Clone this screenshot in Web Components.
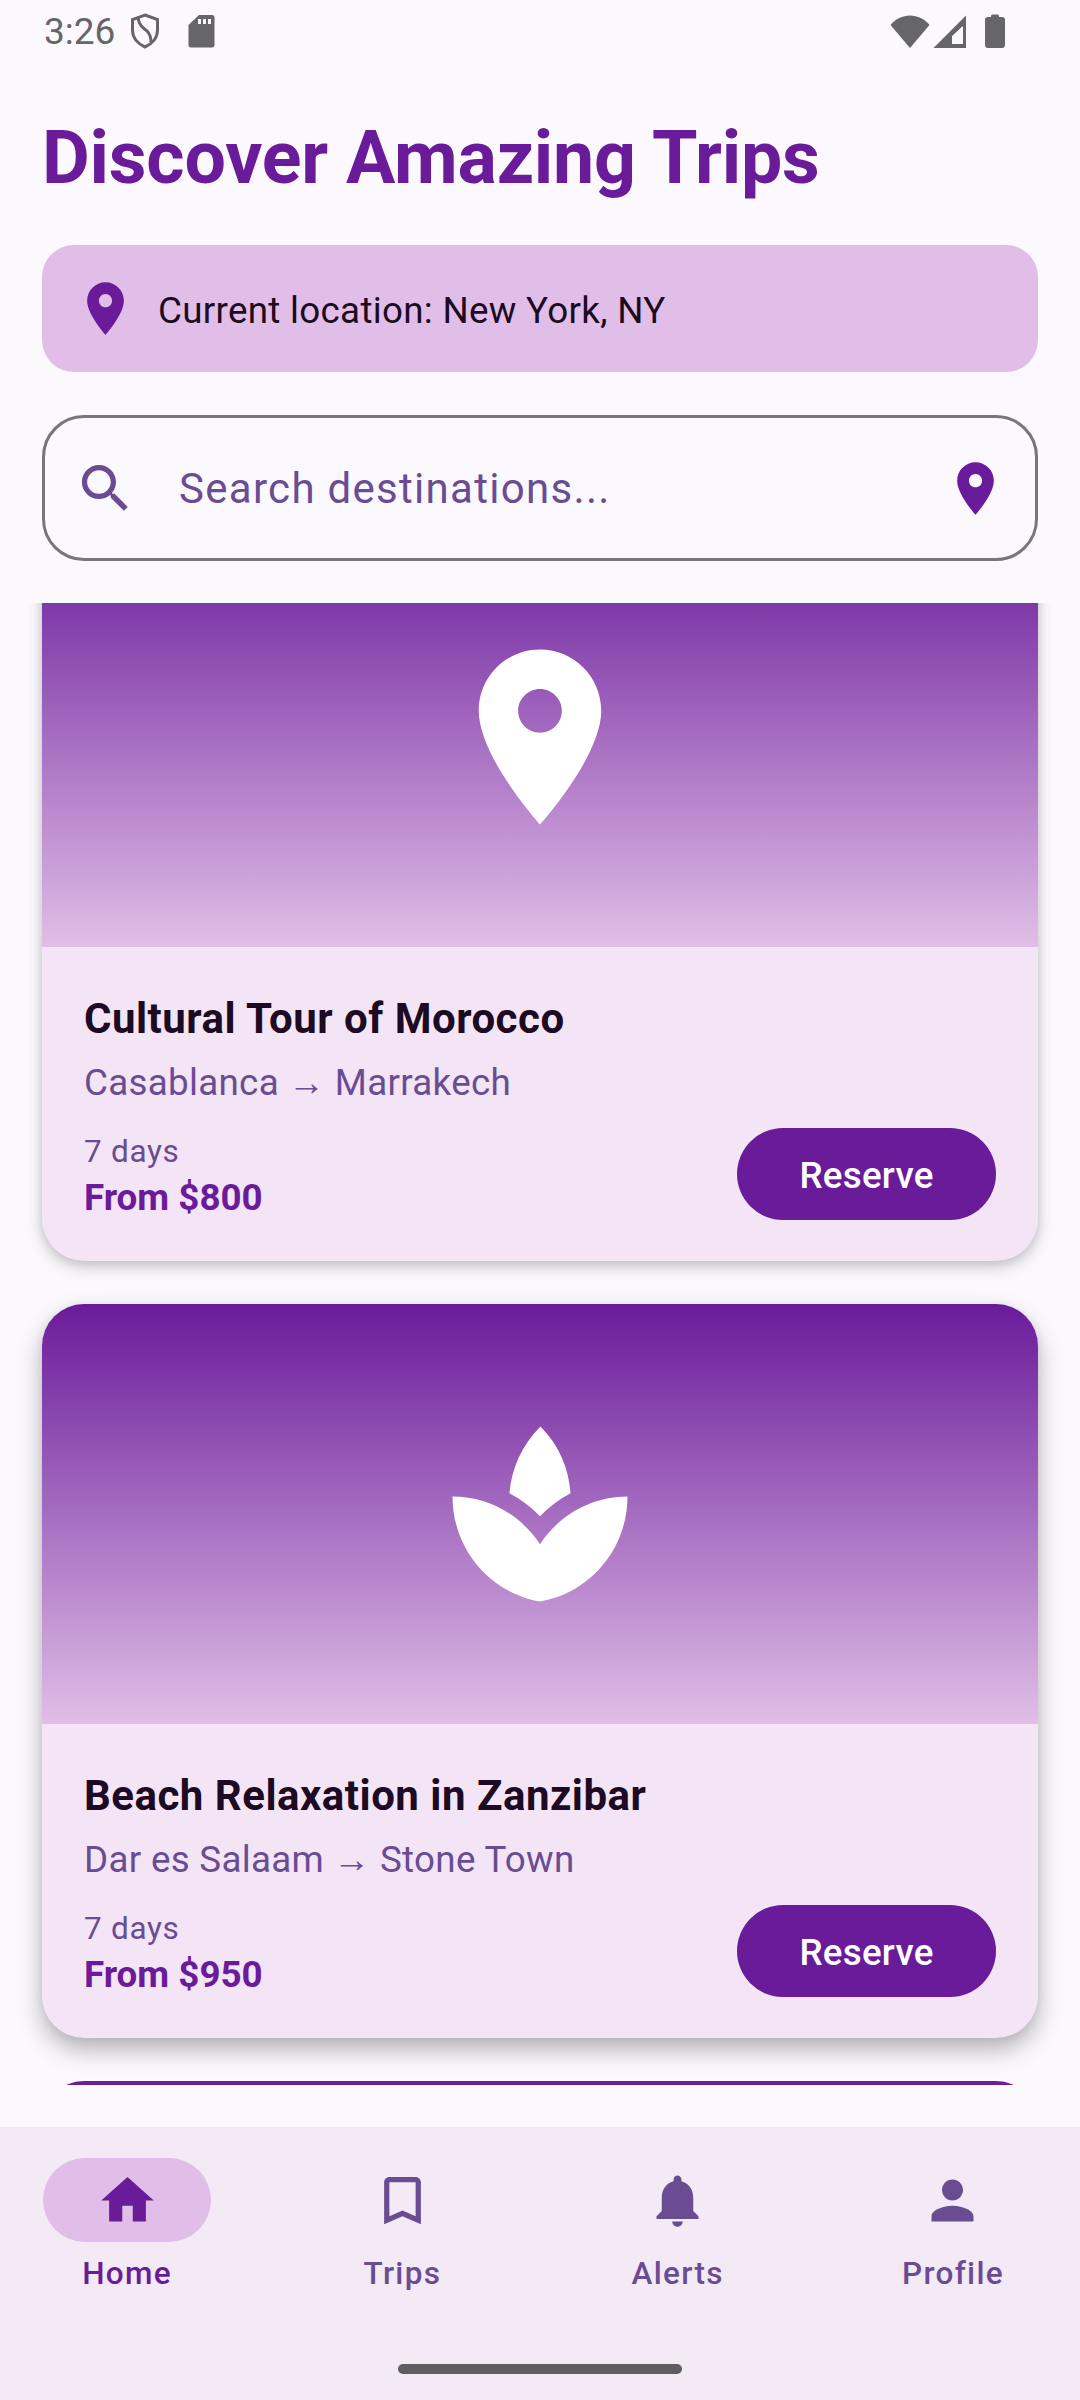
<!DOCTYPE html>
<html>
<head>
<meta charset="utf-8">
<title>Discover Amazing Trips</title>
<style>
   html, body { margin: 0; padding: 0; background: #fbf8fe; }
   body { font-family: Roboto, sans-serif; }
</style>
</head>
<body>
<trips-app>
   <status-bar time="3:26"></status-bar>
   <page-title>Discover Amazing Trips</page-title>
   <location-card>Current location: New York, NY</location-card>
   <search-field placeholder="Search destinations..."></search-field>
   <trip-list>
      <trip-card icon="place" shadow="0 6px 16px rgba(0,0,0,.2), 0 1px 10px rgba(0,0,0,.08)">
         <span slot="name">Cultural Tour of Morocco</span>
         <span slot="route">Casablanca → Marrakech</span>
         <span slot="days">7 days</span>
         <span slot="price">From $800</span>
      </trip-card>
      <trip-card icon="spa" shadow="0 12px 24px rgba(0,0,0,.28), 0 1px 10px rgba(0,0,0,.06)">
         <span slot="name">Beach Relaxation in Zanzibar</span>
         <span slot="route">Dar es Salaam → Stone Town</span>
         <span slot="days">7 days</span>
         <span slot="price">From $950</span>
      </trip-card>
      <!-- only the top edge of the next card shows above the nav -->
      <trip-card peek></trip-card>
   </trip-list>
   <bottom-nav>
      <nav-item icon="home" active>Home</nav-item>
      <nav-item icon="bookmark">Trips</nav-item>
      <nav-item icon="bell">Alerts</nav-item>
      <nav-item icon="person">Profile</nav-item>
   </bottom-nav>
</trips-app>

<script>
const iconPaths = {
   place: 'M12 2C8.13 2 5 5.13 5 9c0 5.25 7 13 7 13s7-7.75 7-13c0-3.87-3.13-7-7-7zm0 9.5c-1.38 0-2.5-1.12-2.5-2.5s1.12-2.5 2.5-2.5 2.5 1.12 2.5 2.5-1.12 2.5-2.5 2.5z',
   spa: 'M15.49 9.63c-.18-2.79-1.31-5.51-3.44-7.63-2.14 2.14-3.32 4.86-3.54 7.63 1.28.68 2.46 1.56 3.49 2.63 1.03-1.06 2.21-1.94 3.49-2.63zM12 15.45C9.85 12.17 6.18 10 2 10c0 5.32 3.36 9.82 8.03 11.49.63.23 1.29.4 1.97.51.68-.12 1.33-.29 1.97-.51C18.64 19.82 22 15.32 22 10c-4.18 0-7.85 2.17-10 5.45z',
   search: 'M15.5 14h-.79l-.28-.27C15.41 12.59 16 11.11 16 9.5 16 5.91 13.09 3 9.5 3S3 5.91 3 9.5 5.91 16 9.5 16c1.61 0 3.09-.59 4.23-1.57l.27.28v.79l5 4.99L20.49 19l-4.99-5zm-6 0C7.01 14 5 11.99 5 9.5S7.01 5 9.5 5 14 7.01 14 9.5 11.99 14 9.5 14z',
   home: 'M10 20v-6h4v6h5v-8h3L12 3 2 12h3v8z',
   bookmark: 'M17 3H7c-1.1 0-2 .9-2 2v16l7-3 7 3V5c0-1.1-.9-2-2-2zm0 15l-5-2.18L7 18V5h10v13z',
   bell: 'M12 22c1.1 0 2-.9 2-2h-4c0 1.1.9 2 2 2zm6-6v-5c0-3.07-1.63-5.64-4.5-6.32V4c0-.83-.67-1.5-1.5-1.5s-1.5.67-1.5 1.5v.68C7.64 5.36 6 7.92 6 11v5l-2 2v1h16v-1l-2-2z',
   person: 'M12 12c2.21 0 4-1.79 4-4s-1.79-4-4-4-4 1.79-4 4 1.79 4 4 4zm0 2c-2.67 0-8 1.34-8 4v2h16v-2c0-2.66-5.33-4-8-4z'
};

class AppIcon extends HTMLElement {
   static get observedAttributes() { return ['name']; }
   constructor() {
      super();
      this.attachShadow({mode: 'open'});
   }
   attributeChangedCallback() {
      const path = iconPaths[this.getAttribute('name')] || '';
      this.shadowRoot.innerHTML = `
         <style>
            :host { display: block; width: var(--icon-size, 63px); height: var(--icon-size, 63px); flex: none; }
            svg { display: block; width: 100%; height: 100%; fill: currentColor; }
         </style>
         <svg viewBox="0 0 24 24"><path d="${path}" /></svg>`;
   }
}
customElements.define('app-icon', AppIcon);

const appTemplate = document.createElement('template');
appTemplate.innerHTML = `
   <style>
      :host { display: flex; flex-direction: column; width: 1080px; height: 2400px; overflow: hidden; background: #fbf8fe; }
   </style>
   <slot></slot>`;

class TripsApp extends HTMLElement {
   constructor() {
      super();
      this.attachShadow({mode: 'open'});
      this.shadowRoot.append(appTemplate.content.cloneNode(true));
   }
}
customElements.define('trips-app', TripsApp);

const statusTemplate = document.createElement('template');
statusTemplate.innerHTML = `
   <style>
      :host { display: flex; align-items: center; height: 62px; padding: 0 75px 0 44px; color: #666568; font: 400 37px Roboto, sans-serif; }
      svg { display: block; fill: #666568; }
      .time { margin-right: 15px; }
      .sd { margin-left: 28px; }
      .right { margin-left: auto; display: flex; align-items: center; }
   </style>
   <span class="time"></span>
   <svg width="30" height="36" viewBox="0 0 30 36">
      <path d="M15 2 L27.5 6.5 V17 C27.5 25 22 31 15 34 C8 31 2.5 25 2.5 17 V6.5 Z" fill="none" stroke="#666568" stroke-width="3" />
      <path d="M8 5 C9 12 13 15 17 18 C20 21 21 24 21 29" fill="none" stroke="#666568" stroke-width="3" />
   </svg>
   <svg class="sd" width="27" height="34" viewBox="0 0 27 34">
      <path fill-rule="evenodd" d="M11 1 H24 C25.6 1 26.5 1.9 26.5 3.5 V31 C26.5 32.6 25.6 33.5 24 33.5 H3 C1.4 33.5 .5 32.6 .5 31 V11 Z M10 5 V10 H13 V5 Z M15 5 V10 H18 V5 Z M20 5 V10 H23 V5 Z" />
   </svg>
   <div class="right">
      <svg width="40" height="33" viewBox="0 0 40 33" style="margin-right:3px">
         <path d="M20 33 L.5 10 C5.5 4 12.5 .5 20 .5 S34.5 4 39.5 10 Z" />
      </svg>
      <svg width="33" height="33" viewBox="0 0 33 33" style="margin-right:19px">
         <path fill-rule="evenodd" d="M33 .5 V33 H.5 Z M30 11 L19 21 V29 H30 Z" />
         <path d="M29 12 L19 22 V29 H29 Z" fill="#fbf8fe" />
      </svg>
      <svg width="20" height="34" viewBox="0 0 20 34">
         <path d="M6 2 C6 1 7 .5 8 .5 H12 C13 .5 14 1 14 2 V3 H17 C19 3 20 4 20 6 V31 C20 33 19 34 17 34 H3 C1 34 0 33 0 31 V6 C0 4 1 3 3 3 H6 Z" />
      </svg>
   </div>`;

class StatusBar extends HTMLElement {
   constructor() {
      super();
      this.attachShadow({mode: 'open'});
      this.shadowRoot.append(statusTemplate.content.cloneNode(true));
   }
   connectedCallback() {
      this.shadowRoot.querySelector('.time').textContent = this.getAttribute('time');
   }
}
customElements.define('status-bar', StatusBar);

const titleTemplate = document.createElement('template');
titleTemplate.innerHTML = `
   <style>
      :host { display: block; padding: 48px 42px 39px; color: #6a1b9a; font: 700 73.5px/96px Roboto, sans-serif; letter-spacing: -.2px; }
   </style>
   <slot></slot>`;

class PageTitle extends HTMLElement {
   constructor() {
      super();
      this.attachShadow({mode: 'open'});
      this.shadowRoot.append(titleTemplate.content.cloneNode(true));
   }
}
customElements.define('page-title', PageTitle);

const locationTemplate = document.createElement('template');
locationTemplate.innerHTML = `
   <style>
      :host { display: flex; align-items: center; gap: 21px; margin: 0 42px 43px; padding: 32px; height: 127px; box-sizing: border-box; border-radius: 32px; background: #e1bee7; color: #1c0b22; font: 400 36.75px Roboto, sans-serif; letter-spacing: .3px; }
      app-icon { color: #6a1b9a; }
      span { padding-top: 3px; }
   </style>
   <app-icon name="place"></app-icon>
   <span><slot></slot></span>`;

class LocationCard extends HTMLElement {
   constructor() {
      super();
      this.attachShadow({mode: 'open'});
      this.shadowRoot.append(locationTemplate.content.cloneNode(true));
   }
}
customElements.define('location-card', LocationCard);

const searchTemplate = document.createElement('template');
searchTemplate.innerHTML = `
   <style>
      :host { display: flex; align-items: center; height: 146px; box-sizing: border-box; margin: 0 42px 42px; padding: 0 28px 0 29px; border: 3px solid #79747e; border-radius: 42px; color: #6a4c93; font: 400 42px Roboto, sans-serif; letter-spacing: 1.3px; }
      .text { flex: 1; margin-left: 42px; }
      .end { color: #6a1b9a; }
   </style>
   <app-icon name="search"></app-icon>
   <span class="text"></span>
   <app-icon class="end" name="place"></app-icon>`;

class SearchField extends HTMLElement {
   constructor() {
      super();
      this.attachShadow({mode: 'open'});
      this.shadowRoot.append(searchTemplate.content.cloneNode(true));
   }
   connectedCallback() {
      this.shadowRoot.querySelector('.text').textContent = this.getAttribute('placeholder');
   }
}
customElements.define('search-field', SearchField);

const listTemplate = document.createElement('template');
listTemplate.innerHTML = `
   <style>
      :host { display: block; height: 1482px; overflow: hidden; }
      /* list is scrolled in the reference */
      .inner { display: flex; flex-direction: column; gap: 43px; padding: 0 42px; margin-top: -76px; }
   </style>
   <div class="inner"><slot></slot></div>`;

class TripList extends HTMLElement {
   constructor() {
      super();
      this.attachShadow({mode: 'open'});
      this.shadowRoot.append(listTemplate.content.cloneNode(true));
   }
}
customElements.define('trip-list', TripList);

const cardTemplate = document.createElement('template');
cardTemplate.innerHTML = `
   <style>
      :host { display: block; border-radius: 42px; background: #f3e5f5; overflow: hidden; height: 734px; flex: none; }
      :host([peek]) app-icon { display: none; }
      .hero { display: flex; align-items: center; justify-content: center; height: 420px; color: #fff; background: linear-gradient(#6a1b9a, #e1bee7); --icon-size: 210px; }
      .body { display: flex; flex-direction: column; padding: 44px 42px 42px; }
      .name { color: #1c0b22; font: 700 42px/56px Roboto, sans-serif; letter-spacing: .5px; }
      .route { margin-top: 12px; color: #6a4c93; font: 400 36.75px/48px Roboto, sans-serif; letter-spacing: .3px; }
      .foot { display: flex; align-items: flex-end; justify-content: space-between; margin-top: 21px; }
      .days { margin-bottom: 2px; color: #6a4c93; font: 400 31.5px/45px Roboto, sans-serif; letter-spacing: .7px; }
      .price { color: #6a1b9a; font: 700 36.75px/44px Roboto, sans-serif; }
      .info { display: flex; flex-direction: column; }
      button { width: 259px; height: 92px; border: none; border-radius: 46px; background: #6a1b9a; color: #fff; font: 500 36.75px Roboto, sans-serif; letter-spacing: .26px; padding: 2px 0 0; }
   </style>
   <div class="hero"><app-icon></app-icon></div>
   <div class="body">
      <div class="name"><slot name="name"></slot></div>
      <div class="route"><slot name="route"></slot></div>
      <div class="foot">
         <div class="info">
            <div class="days"><slot name="days"></slot></div>
            <div class="price"><slot name="price"></slot></div>
         </div>
         <button>Reserve</button>
      </div>
   </div>`;

class TripCard extends HTMLElement {
   constructor() {
      super();
      this.attachShadow({mode: 'open'});
      this.shadowRoot.append(cardTemplate.content.cloneNode(true));
   }
   connectedCallback() {
      if (this.hasAttribute('peek')) {
         this.shadowRoot.querySelector('.body').remove();
         return;
      }
      this.shadowRoot.querySelector('app-icon').setAttribute('name', this.getAttribute('icon'));
      if (this.hasAttribute('shadow')) {
         this.style.boxShadow = this.getAttribute('shadow');
      }
   }
}
customElements.define('trip-card', TripCard);

const navTemplate = document.createElement('template');
navTemplate.innerHTML = `
   <style>
      :host { display: block; height: 273px; box-sizing: border-box; margin-top: 42px; padding: 31px 43px 0; background: #f3eaf6; position: relative; }
      .items { display: flex; justify-content: space-between; }
      .handle { position: absolute; left: 398px; top: 237px; width: 284px; height: 10px; border-radius: 5px; background: #605d62; }
   </style>
   <div class="items"><slot></slot></div>
   <div class="handle"></div>`;

class BottomNav extends HTMLElement {
   constructor() {
      super();
      this.attachShadow({mode: 'open'});
      this.shadowRoot.append(navTemplate.content.cloneNode(true));
   }
}
customElements.define('bottom-nav', BottomNav);

const navItemTemplate = document.createElement('template');
navItemTemplate.innerHTML = `
   <style>
      :host { display: flex; flex-direction: column; align-items: center; width: 168px; color: #6a4c93; font: 500 31.5px/42px Roboto, sans-serif; letter-spacing: 1.3px; }
      :host([active]) { color: #6a1b9a; }
      .pill { display: flex; align-items: center; justify-content: center; width: 168px; height: 84px; border-radius: 42px; }
      :host([active]) .pill { background: #e1bee7; }
      .label { margin-top: 11px; }
   </style>
   <div class="pill"><app-icon></app-icon></div>
   <div class="label"><slot></slot></div>`;

class NavItem extends HTMLElement {
   constructor() {
      super();
      this.attachShadow({mode: 'open'});
      this.shadowRoot.append(navItemTemplate.content.cloneNode(true));
   }
   connectedCallback() {
      this.shadowRoot.querySelector('app-icon').setAttribute('name', this.getAttribute('icon'));
   }
}
customElements.define('nav-item', NavItem);
</script>
</body>
</html>
